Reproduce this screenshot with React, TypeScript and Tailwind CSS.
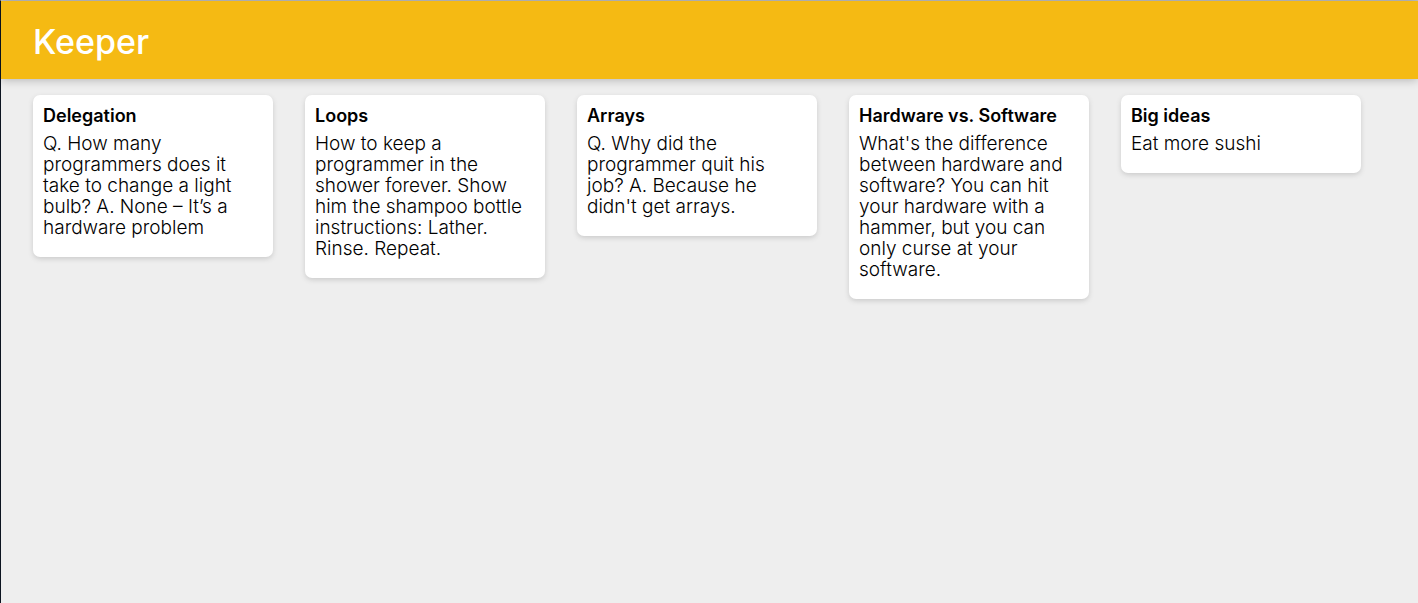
const notes = [
  { title: "Delegation", content: "Q. How many programmers does it take to change a light bulb? A. None – It’s a hardware problem" },
  { title: "Loops", content: "How to keep a programmer in the shower forever. Show him the shampoo bottle instructions: Lather. Rinse. Repeat." },
  { title: "Arrays", content: "Q. Why did the programmer quit his job? A. Because he didn't get arrays." },
  { title: "Hardware vs. Software", content: "What's the difference between hardware and software? You can hit your hardware with a hammer, but you can only curse at your software." },
  { title: "Big ideas", content: "Eat more sushi" },
];

function Header() {
  return (
    <header className="bg-[#f5ba13] px-8 py-4 shadow-[0_0_10px_0_rgba(0,0,0,0.3)]">
      <h1 className="pt-1 text-[34px] leading-[42px] font-medium text-white">Keeper</h1>
    </header>
  );
}

function Note({ title, content }: { title: string; content: string }) {
  return (
    <article className="w-60 rounded-[7px] bg-white pt-[10px] pr-4 pb-[19px] pl-[10px] shadow-[0_2px_5px_#cccccc]">
      <h2 className="mb-[7px] text-[18px] leading-[21px] font-semibold">{title}</h2>
      <p className="text-[19px] leading-[21px] font-light">{content}</p>
    </article>
  );
}

export default function App() {
  return (
    <div className="min-h-screen border-t border-l border-t-[#c8c8c8] border-l-[#0c1420] bg-[#eeeeee] font-['Inter',sans-serif] text-black">
      <Header />
      <main className="flex flex-wrap items-start gap-x-8 gap-y-4 px-8 py-4">
        {notes.map((note) => (
          <Note key={note.title} {...note} />
        ))}
      </main>
    </div>
  );
}
